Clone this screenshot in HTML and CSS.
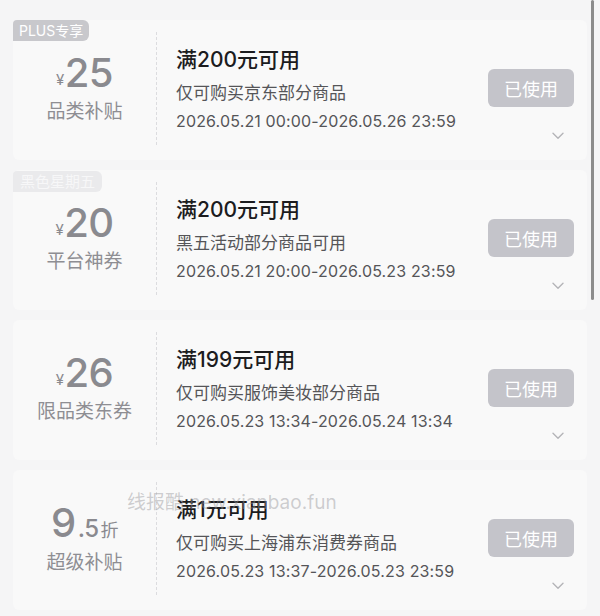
FILE: index.html
```html
<!DOCTYPE html>
<html lang="zh-CN">
<head>
    <meta charset="UTF-8">
    <meta name="viewport" content="width=device-width, initial-scale=1.0">
    <title>我的优惠券</title>
    <link rel="stylesheet" href="styles.css">
</head>
<body>
    <div class="coupon-list">
        <div class="coupon">
            <span class="tag">PLUS专享</span>
            <div class="coupon-left">
                <div class="price"><span class="yen">¥</span>25</div>
                <div class="kind">品类补贴</div>
            </div>
            <div class="coupon-info">
                <div class="title">满200元可用</div>
                <div class="desc">仅可购买京东部分商品</div>
                <div class="date">2026.05.21 00:00-2026.05.26 23:59</div>
            </div>
            <div class="coupon-action">
                <button class="used-btn">已使用</button>
                <svg class="chevron" width="12" height="8" viewBox="0 0 12 8"><path d="M1 1.2 6 6.2 11 1.2" fill="none" stroke="#b4b4b8" stroke-width="1.4" stroke-linecap="round" stroke-linejoin="round"/></svg>
            </div>
        </div>

        <div class="coupon">
            <span class="tag tag-faded">黑色星期五</span>
            <div class="coupon-left">
                <div class="price"><span class="yen">¥</span>20</div>
                <div class="kind">平台神券</div>
            </div>
            <div class="coupon-info">
                <div class="title">满200元可用</div>
                <div class="desc">黑五活动部分商品可用</div>
                <div class="date">2026.05.21 20:00-2026.05.23 23:59</div>
            </div>
            <div class="coupon-action">
                <button class="used-btn">已使用</button>
                <svg class="chevron" width="12" height="8" viewBox="0 0 12 8"><path d="M1 1.2 6 6.2 11 1.2" fill="none" stroke="#b4b4b8" stroke-width="1.4" stroke-linecap="round" stroke-linejoin="round"/></svg>
            </div>
        </div>

        <div class="coupon">
            <div class="coupon-left">
                <div class="price"><span class="yen">¥</span>26</div>
                <div class="kind">限品类东券</div>
            </div>
            <div class="coupon-info">
                <div class="title">满199元可用</div>
                <div class="desc">仅可购买服饰美妆部分商品</div>
                <div class="date">2026.05.23 13:34-2026.05.24 13:34</div>
            </div>
            <div class="coupon-action">
                <button class="used-btn">已使用</button>
                <svg class="chevron" width="12" height="8" viewBox="0 0 12 8"><path d="M1 1.2 6 6.2 11 1.2" fill="none" stroke="#b4b4b8" stroke-width="1.4" stroke-linecap="round" stroke-linejoin="round"/></svg>
            </div>
        </div>

        <div class="coupon">
            <div class="coupon-left">
                <div class="price">9<span class="decimal">.5</span><span class="zhe">折</span></div>
                <div class="kind">超级补贴</div>
            </div>
            <div class="coupon-info">
                <div class="title">满1元可用</div>
                <div class="desc">仅可购买上海浦东消费券商品</div>
                <div class="date">2026.05.23 13:37-2026.05.23 23:59</div>
            </div>
            <div class="coupon-action">
                <button class="used-btn">已使用</button>
                <svg class="chevron" width="12" height="8" viewBox="0 0 12 8"><path d="M1 1.2 6 6.2 11 1.2" fill="none" stroke="#b4b4b8" stroke-width="1.4" stroke-linecap="round" stroke-linejoin="round"/></svg>
            </div>
            <div class="watermark">线报酷 new.xianbao.fun</div>
        </div>
    </div>

    <div class="scrollbar"></div>
</body>
</html>
```

FILE: styles.css
```css
body {
    font-family: 'Inter', 'Noto Sans CJK SC', sans-serif;
    background-color: #f5f5f6;
    margin: 0;
    padding: 0;
    color: #1a1a1a;
    overflow: hidden;
}

.coupon-list {
    display: flex;
    flex-direction: column;
    gap: 10px;
    padding: 20px 13px 0;
}

.coupon {
    position: relative;
    display: flex;
    height: 140px;
    background-color: #f9f9f9;
    border-radius: 6px;
}

.tag {
    position: absolute;
    top: 0;
    left: 0;
    padding: 0 6px;
    height: 21px;
    line-height: 21px;
    font-size: 14px;
    color: #fff;
    background-color: #c8c8cc;
    border-radius: 4px 6px 6px 0;
}

.tag-faded {
    top: 1px;
    background-color: #eaeaec;
    color: #f7f7f8;
    padding: 0 7px;
    font-size: 15px;
}

.coupon-left {
    width: 144px;
    display: flex;
    flex-direction: column;
    align-items: center;
    color: #8a8a8f;
    border-right: 1px dashed #dcdcdf;
    margin: 12px 0 15px;
    padding-top: 19px;
    box-sizing: border-box;
}

.price {
    font-size: 40px;
    font-weight: 500;
    line-height: 44px;
    letter-spacing: -0.5px;
}

.yen {
    font-size: 15px;
    font-weight: 400;
    margin-right: 1px;
    vertical-align: 2px;
}

.decimal {
    font-size: 24px;
    margin-left: 2px;
}

.zhe {
    font-size: 18px;
    font-weight: 400;
    margin-left: 2px;
}

.kind {
    font-size: 19px;
    line-height: 26px;
    margin-top: -3px;
    color: #8e8e93;
}

.coupon-info {
    flex: 1;
    padding: 26px 0 0 19px;
}

.title {
    font-size: 21px;
    line-height: 28px;
    font-weight: 500;
    color: #1c1c1e;
}

.desc {
    font-size: 17px;
    line-height: 24px;
    margin-top: 7px;
    color: #555558;
}

.date {
    font-size: 16px;
    line-height: 24px;
    margin-top: 4px;
    letter-spacing: 0.15px;
    color: #555558;
}

.coupon-action {
    display: flex;
    flex-direction: column;
    align-items: flex-end;
    padding: 49px 13px 0 0;
}

.used-btn {
    width: 86px;
    height: 38px;
    border: none;
    border-radius: 6px;
    background-color: #c4c4ca;
    color: #fff;
    font-family: inherit;
    font-size: 18px;
    padding: 0;
}

.chevron {
    margin: 25px 10px 0 0;
}

.watermark {
    position: absolute;
    left: 114px;
    top: 17px;
    font-size: 19px;
    color: rgba(150, 150, 155, 0.45);
    white-space: nowrap;
}

.scrollbar {
    position: absolute;
    top: 0;
    right: 6px;
    width: 3px;
    height: 300px;
    border-radius: 2px;
    background-color: #8c8c8c;
}
```
